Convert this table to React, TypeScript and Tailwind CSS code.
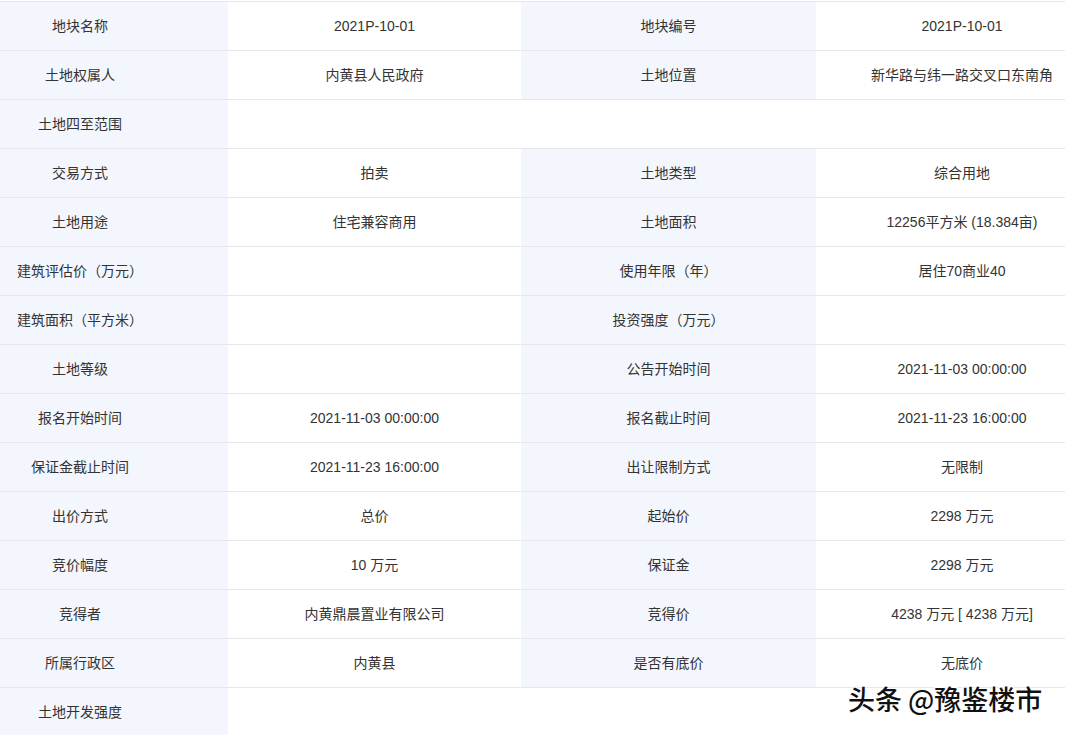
const rows: [string, string, string?, string?][] = [
  ['地块名称', '2021P-10-01', '地块编号', '2021P-10-01'],
  ['土地权属人', '内黄县人民政府', '土地位置', '新华路与纬一路交叉口东南角'],
  ['土地四至范围', ''],
  ['交易方式', '拍卖', '土地类型', '综合用地'],
  ['土地用途', '住宅兼容商用', '土地面积', '12256平方米 (18.384亩)'],
  ['建筑评估价（万元）', '', '使用年限（年）', '居住70商业40'],
  ['建筑面积（平方米）', '', '投资强度（万元）', ''],
  ['土地等级', '', '公告开始时间', '2021-11-03 00:00:00'],
  ['报名开始时间', '2021-11-03 00:00:00', '报名截止时间', '2021-11-23 16:00:00'],
  ['保证金截止时间', '2021-11-23 16:00:00', '出让限制方式', '无限制'],
  ['出价方式', '总价', '起始价', '2298 万元'],
  ['竞价幅度', '10 万元', '保证金', '2298 万元'],
  ['竞得者', '内黄鼎晨置业有限公司', '竞得价', '4238 万元 [ 4238 万元]'],
  ['所属行政区', '内黄县', '是否有底价', '无底价'],
  ['土地开发强度', ''],
]

export default function App() {
  return (
    <div
      className="relative w-[1065px] h-[735px] overflow-hidden bg-white pt-px text-[14px] text-[#333]"
      style={{ fontFamily: '"Liberation Sans", "Noto Sans CJK SC", sans-serif' }}
    >
      <div className="grid grid-cols-[228px_293px_295px_249px]">
        {rows.map(([l1, v1, l2, v2], i) => {
          const full = l2 === undefined
          return (
            <div key={i} className="contents">
              <div className="h-[49px] border-t border-[#e5e7eb] bg-[#f3f6fd] flex items-center justify-center pr-[68px] whitespace-nowrap">
                {l1}
              </div>
              {full ? (
                <div className="col-span-3 h-[49px] border-t border-[#e5e7eb] bg-white" />
              ) : (
                <>
                  <div className="h-[49px] border-t border-[#e5e7eb] flex items-center justify-center whitespace-nowrap">
                    {v1}
                  </div>
                  <div className="h-[49px] border-t border-[#e5e7eb] bg-[#f3f6fd] flex items-center justify-center whitespace-nowrap">
                    {l2}
                  </div>
                  <div className="h-[49px] border-t border-[#e5e7eb] flex items-center justify-center pl-[43px] whitespace-nowrap">
                    {v2}
                  </div>
                </>
              )}
            </div>
          )
        })}
      </div>
      {/* watermark */}
      <div
        className="absolute left-[848px] top-[679px] text-[27px] font-medium text-[#111] whitespace-nowrap [text-shadow:1px_1px_0_#fff,-1px_-1px_0_#fff,1px_-1px_0_#fff,-1px_1px_0_#fff]"
        style={{ fontFamily: '"Noto Sans CJK SC", sans-serif' }}
      >
        头条 @豫鉴楼市
      </div>
    </div>
  )
}
